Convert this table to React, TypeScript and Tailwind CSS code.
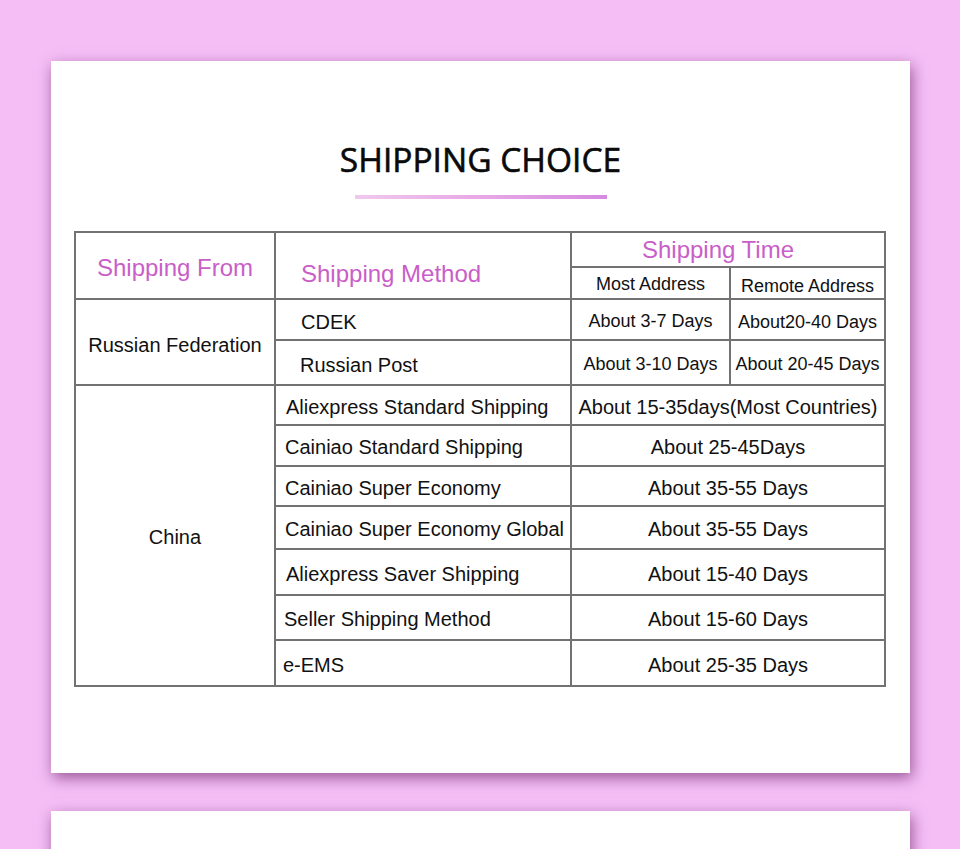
import React from "react";

const methods: [string, string, string][] = [
  ["Aliexpress Standard Shipping", "About 15-35days(Most Countries)", "pl-[10px]"],
  ["Cainiao Standard Shipping", "About 25-45Days", "pl-[9px]"],
  ["Cainiao Super Economy", "About 35-55 Days", "pl-[9px]"],
  ["Cainiao Super Economy Global", "About 35-55 Days", "pl-[9px]"],
  ["Aliexpress Saver Shipping", "About 15-40 Days", "pl-[10px]"],
  ["Seller Shipping Method", "About 15-60 Days", "pl-[8px]"],
  ["e-EMS", "About 25-35 Days", "pl-[7px]"],
];

const rowStarts = ["row-start-5", "row-start-6", "row-start-7", "row-start-8", "row-start-9", "row-start-10", "row-start-11"];

export default function App() {
  return (
    <div className="h-[849px] overflow-hidden bg-[#f5bef5] pt-[61px] pl-[51px]" style={{ fontFamily: '"Liberation Sans", Arial, sans-serif' }}>
      <div className="flex h-[712px] w-[859px] flex-col bg-white shadow-[2px_5px_14px_rgba(90,20,90,0.6)]">
        <div className="flex flex-col items-center pt-[82px]">
          <h1 className="text-[33.5px] leading-[32px] text-[#0a0a0a] [-webkit-text-stroke:0.6px_#0a0a0a]" style={{ fontFamily: '"Open Sans", sans-serif' }}>
            SHIPPING CHOICE
          </h1>
          <div className="mt-[20px] h-[4px] w-[252px] bg-gradient-to-r from-[#f0c8ee] via-[#e8a8e6] to-[#d58ae0]" />
        </div>
        <div className="ml-[23px] mt-[32px] grid w-[812px] grid-cols-[198px_294px_157px_153px] grid-rows-[33px_30px_39px_43px_38px_39px_38px_41px_44px_43px_44px] gap-[2px] bg-[#727272] p-[2px] text-[20px] text-[#111]">
          <div className="col-start-1 row-start-1 row-span-2 flex items-center justify-center bg-white pt-[4px] text-[24px] text-[#c95ec9]">
            Shipping From
          </div>
          <div className="col-start-2 row-start-1 row-span-2 flex items-center bg-white pl-[25px] pt-[16px] text-[24px] text-[#c95ec9]">
            Shipping Method
          </div>
          <div className="col-start-3 col-span-2 row-start-1 flex items-center justify-center bg-white pr-[20px] text-[24px] text-[#c95ec9]">
            Shipping Time
          </div>
          <div className="col-start-3 row-start-2 flex items-center justify-center bg-white pt-[2px] text-[18px]">Most Address</div>
          <div className="col-start-4 row-start-2 flex items-center justify-center bg-white pt-[7px] text-[18px]">Remote Address</div>

          <div className="col-start-1 row-start-3 row-span-2 flex items-center justify-center bg-white pt-[6px]">Russian Federation</div>
          <div className="col-start-2 row-start-3 flex items-center bg-white pl-[25px] pt-[5px]">CDEK</div>
          <div className="col-start-3 row-start-3 flex items-center justify-center bg-white pt-[4px] text-[18px]">About 3-7 Days</div>
          <div className="col-start-4 row-start-3 flex items-center justify-center bg-white pt-[6px] text-[18px]">About20-40 Days</div>
          <div className="col-start-2 row-start-4 flex items-center bg-white pl-[24px] pt-[4px]">Russian Post</div>
          <div className="col-start-3 row-start-4 flex items-center justify-center bg-white pt-[4px] text-[18px]">About 3-10 Days</div>
          <div className="col-start-4 row-start-4 flex items-center justify-center bg-white pt-[4px] text-[18px]">About 20-45 Days</div>

          <div className="col-start-1 row-start-5 row-span-7 flex items-center justify-center bg-white pt-[2px]">China</div>
          {methods.map(([m, t, pl], i) => (
            <React.Fragment key={m}>
              <div className={`col-start-2 ${rowStarts[i]} flex items-center bg-white pt-[3px] ${pl}`}>{m}</div>
              <div className={`col-start-3 col-span-2 ${rowStarts[i]} flex items-center justify-center bg-white pt-[3px]`}>{t}</div>
            </React.Fragment>
          ))}
        </div>
      </div>
      <div className="mt-[38px] h-[120px] w-[859px] bg-white shadow-[2px_5px_14px_rgba(90,20,90,0.6)]" />
    </div>
  );
}
